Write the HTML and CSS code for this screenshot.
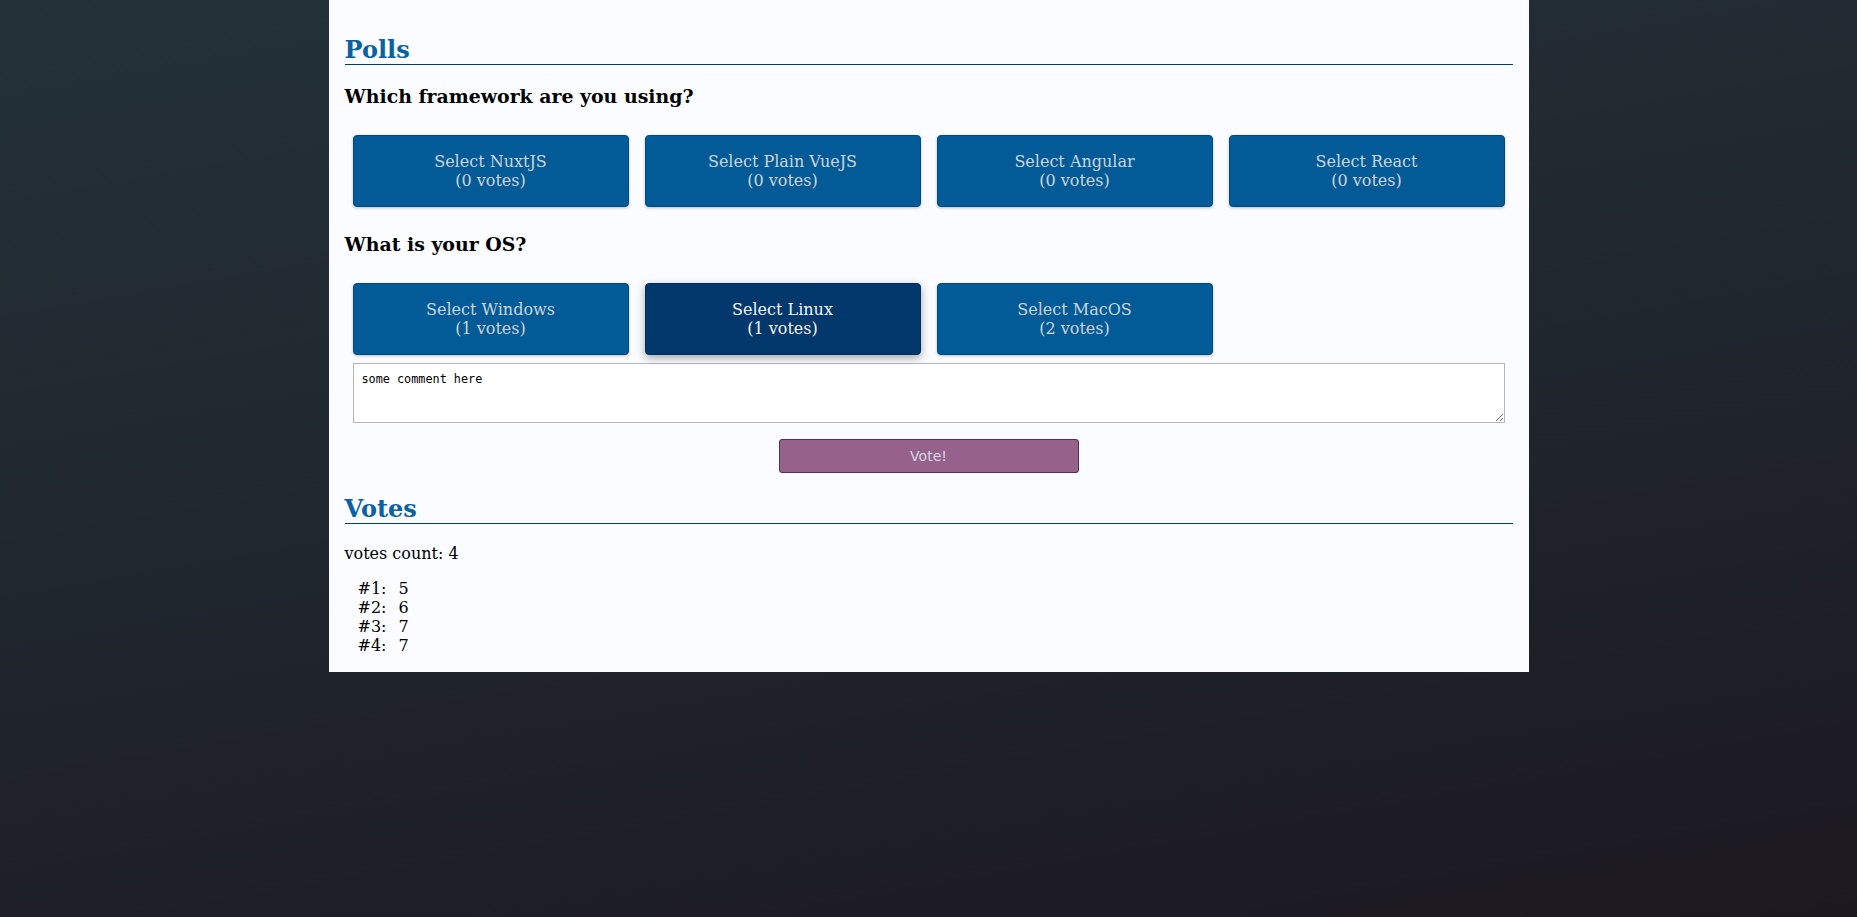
FILE: index.html
```html
<!DOCTYPE html>
<html lang="en">
<head>
<meta charset="utf-8">
<title>Polls</title>
<link rel="stylesheet" href="styles.css">
</head>
<body>
<main class="panel">
  <h2 class="section-title">Polls</h2>
  <h3 class="question">Which framework are you using?</h3>
  <div class="options">
    <button class="option">Select NuxtJS<br>(0 votes)</button>
    <button class="option">Select Plain VueJS<br>(0 votes)</button>
    <button class="option">Select Angular<br>(0 votes)</button>
    <button class="option">Select React<br>(0 votes)</button>
  </div>
  <h3 class="question">What is your OS?</h3>
  <div class="options">
    <button class="option">Select Windows<br>(1 votes)</button>
    <button class="option option-selected">Select Linux<br>(1 votes)</button>
    <button class="option">Select MacOS<br>(2 votes)</button>
    <span class="option-spacer"></span>
  </div>
  <textarea class="comment">some comment here</textarea>
  <div class="vote-row">
    <button class="vote-btn">Vote!</button>
  </div>
  <h2 class="section-title">Votes</h2>
  <p class="count">votes count: 4</p>
  <ul class="vote-list">
    <li><span class="vote-key">#1:</span><span class="vote-val">5</span></li>
    <li><span class="vote-key">#2:</span><span class="vote-val">6</span></li>
    <li><span class="vote-key">#3:</span><span class="vote-val">7</span></li>
    <li><span class="vote-key">#4:</span><span class="vote-val">7</span></li>
  </ul>
</main>
</body>
</html>
```

FILE: styles.css
```css
html, body {
  margin: 0;
  padding: 0;
}
body {
  min-height: 917px;
  background: linear-gradient(170deg, #243139 0%, #20262d 50%, #1c1820 100%);
  font-family: "DejaVu Serif", serif;
  font-size: 16px;
  color: #000;
}
.panel {
  width: 1168px;
  margin: 0 auto;
  padding: 16px 16px 1px;
  background: #fafcff;
  display: flow-root;
}
.section-title {
  font-size: 24px;
  font-weight: bold;
  color: #0a62a2;
  margin: 20px 0;
  line-height: 28px;
  border-bottom: 1px solid #003d6b;
}
.question {
  font-size: 18.9px;
  font-weight: bold;
  margin: 18px 0 20px;
  line-height: 22px;
}
.section-title + .question {
  margin-top: 19px;
}
.options {
  display: grid;
  grid-template-columns: repeat(4, 1fr);
}
.option {
  margin: 8px;
  padding: 16px 4px;
  border: 1px solid #004a7f;
  border-radius: 4px;
  background: #025b96;
  color: #cdd3db;
  font-family: "DejaVu Serif", serif;
  font-size: 16px;
  line-height: 19px;
  box-shadow: 0 1px 3px rgba(0, 0, 0, 0.25);
  cursor: pointer;
}
.option-selected {
  background: #02386b;
  border-color: #022f5c;
  color: #f4f4f6;
  box-shadow: 0 3px 8px rgba(0, 0, 0, 0.35);
}
.comment {
  display: block;
  box-sizing: border-box;
  width: calc(100% - 16px);
  height: 60px;
  margin: 0 8px;
  padding: 8px;
  border: 1px solid #b5b5b5;
  background: #fff;
  font-family: "DejaVu Sans Mono", monospace;
  font-size: 11.8px;
  line-height: 14px;
  color: #000;
  resize: vertical;
}
.vote-row {
  display: flex;
  justify-content: center;
  padding: 16px 0 2px;
}
.vote-btn {
  width: 300px;
  height: 34px;
  box-sizing: border-box;
  border: 1px solid #5a2c53;
  border-radius: 3px;
  background: #96618b;
  color: #d8d6e6;
  font-family: "DejaVu Sans", sans-serif;
  font-size: 14px;
  cursor: pointer;
}
.count {
  margin: 16px 0;
  line-height: 19px;
}
.vote-list {
  list-style: none;
  margin: 16px 0;
  padding: 0 0 0 13px;
  line-height: 19px;
}
.vote-list li {
  display: flex;
}
.vote-key {
  width: 41px;
}
```
